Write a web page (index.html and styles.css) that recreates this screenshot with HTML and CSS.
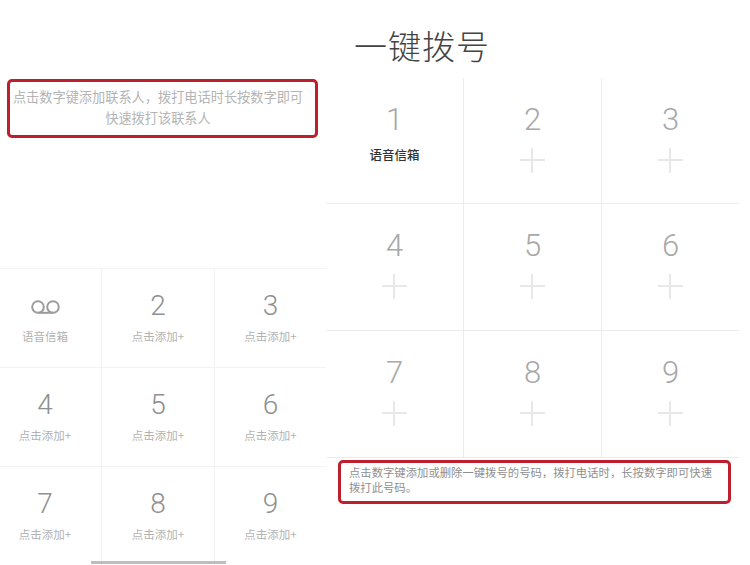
FILE: index.html
```html
<!DOCTYPE html>
<html lang="zh-CN">
<head>
    <meta charset="UTF-8">
    <title>一键拨号</title>
    <link rel="stylesheet" href="styles.css">
</head>
<body>
    <div class="page">
        <div class="panel-left">
            <div class="notice notice-center">点击数字键添加联系人，拨打电话时长按数字即可<br>快速拨打该联系人</div>
            <div class="contact-grid">
                <div class="contact-key">
                    <svg class="voicemail" viewBox="0 0 29 14" width="29" height="14">
                        <circle cx="7" cy="7" r="5.8"/>
                        <circle cx="22" cy="7" r="5.8"/>
                        <line x1="7" y1="12.8" x2="22" y2="12.8"/>
                    </svg>
                    <span class="key-label">语音信箱</span>
                </div>
                <div class="contact-key"><span class="key-num">2</span><span class="key-label">点击添加+</span></div>
                <div class="contact-key"><span class="key-num">3</span><span class="key-label">点击添加+</span></div>
                <div class="contact-key"><span class="key-num">4</span><span class="key-label">点击添加+</span></div>
                <div class="contact-key"><span class="key-num">5</span><span class="key-label">点击添加+</span></div>
                <div class="contact-key"><span class="key-num">6</span><span class="key-label">点击添加+</span></div>
                <div class="contact-key"><span class="key-num">7</span><span class="key-label">点击添加+</span></div>
                <div class="contact-key"><span class="key-num">8</span><span class="key-label">点击添加+</span></div>
                <div class="contact-key"><span class="key-num">9</span><span class="key-label">点击添加+</span></div>
            </div>
            <div class="home-bar"></div>
        </div>
        <div class="panel-right">
            <h1>一键拨号</h1>
            <div class="dial-grid">
                <div class="dial-key"><span class="dial-num">1</span><span class="dial-label">语音信箱</span></div>
                <div class="dial-key"><span class="dial-num">2</span><span class="plus"></span></div>
                <div class="dial-key"><span class="dial-num">3</span><span class="plus"></span></div>
                <div class="dial-key"><span class="dial-num">4</span><span class="plus"></span></div>
                <div class="dial-key"><span class="dial-num">5</span><span class="plus"></span></div>
                <div class="dial-key"><span class="dial-num">6</span><span class="plus"></span></div>
                <div class="dial-key"><span class="dial-num">7</span><span class="plus"></span></div>
                <div class="dial-key"><span class="dial-num">8</span><span class="plus"></span></div>
                <div class="dial-key"><span class="dial-num">9</span><span class="plus"></span></div>
            </div>
            <div class="notice notice-left">点击数字键添加或删除一键拨号的号码，拨打电话时，长按数字即可快速拨打此号码。</div>
        </div>
    </div>
</body>
</html>
```

FILE: styles.css
```css
html, body {
    margin: 0;
    padding: 0;
    background-color: #fff;
}
body {
    font-family: "Noto Sans CJK SC", "Noto Sans", sans-serif;
}
.page {
    display: flex;
    width: 750px;
    height: 565px;
    overflow: hidden;
}

/* left phone shot */
.panel-left {
    position: relative;
    width: 326px;
    flex: none;
}
.notice {
    box-sizing: border-box;
    border: 3px solid #bd202c;
    border-radius: 5px;
    background-color: #fff;
}
.notice-center {
    width: 311px;
    height: 59px;
    margin: 79px 0 0 7px;
    padding: 4px 9px 0 0;
    font-size: 13.2px;
    line-height: 21px;
    color: #b4b4b4;
    text-align: center;
    white-space: nowrap;
}
.contact-grid {
    display: grid;
    grid-template-columns: 102px 113px 111px;
    grid-template-rows: 99px 99px 99px;
    margin-top: 130px;
    border-top: 1px solid #f3f3f3;
}
.contact-key {
    display: flex;
    flex-direction: column;
    align-items: center;
    border-right: 1px solid #f3f3f3;
    border-bottom: 1px solid #f3f3f3;
    box-sizing: border-box;
    padding-top: 20px;
}
.contact-key:nth-child(3n+1) {
    padding-right: 11px;
}
.contact-key:nth-child(3n) {
    border-right: none;
}
.contact-key:nth-child(n+7) {
    border-bottom: none;
}
.key-num {
    font-family: "Roboto", sans-serif;
    font-weight: 300;
    font-size: 28px;
    line-height: 34px;
    color: #909090;
}
.key-label {
    margin-top: 5px;
    font-size: 11.5px;
    line-height: 16px;
    color: #b2b2b2;
}
.voicemail {
    margin: 11px 0 9px;
    fill: none;
    stroke: #9c9c9c;
    stroke-width: 2;
}
.home-bar {
    position: absolute;
    left: 91px;
    bottom: 1px;
    width: 135px;
    height: 3px;
    background-color: #bdbdbd;
}

/* right phone shot */
.panel-right {
    flex: 1;
    min-width: 0;
}
h1 {
    margin: 0;
    height: 78px;
    padding: 21px 0 0 28px;
    box-sizing: border-box;
    font-size: 33px;
    line-height: 48px;
    font-weight: 200;
    letter-spacing: 1px;
    color: #444;
}
.dial-grid {
    display: grid;
    grid-template-columns: 138px 138px 137px;
    grid-template-rows: 126px 127px 126px;
    width: 413px;
    border-bottom: 1px solid #ececec;
}
.dial-key {
    display: flex;
    flex-direction: column;
    align-items: center;
    box-sizing: border-box;
    padding-top: 24px;
    border-right: 1px solid #ececec;
    border-bottom: 1px solid #ececec;
}
.dial-key:nth-child(3n) {
    border-right: none;
}
.dial-key:nth-child(n+7) {
    border-bottom: none;
}
.dial-num {
    font-family: "Roboto", sans-serif;
    font-weight: 300;
    font-size: 31px;
    line-height: 36px;
    color: #a8a8a8;
}
.dial-label {
    margin-top: 8px;
    font-size: 12.5px;
    line-height: 18px;
    font-weight: 500;
    color: #333;
}
.plus {
    position: relative;
    width: 25px;
    height: 25px;
    margin-top: 10px;
}
.plus::before,
.plus::after {
    content: "";
    position: absolute;
    background-color: #e8e8e8;
}
.plus::before {
    left: 0;
    right: 0;
    top: 11px;
    height: 2px;
}
.plus::after {
    top: 0;
    bottom: 0;
    left: 11px;
    width: 2px;
}
.notice-left {
    width: 393px;
    height: 44px;
    margin: 2px 0 0 12px;
    padding: 2px 8px 0 8px;
    font-size: 11.35px;
    line-height: 15px;
    color: #8f8f8f;
}
```
